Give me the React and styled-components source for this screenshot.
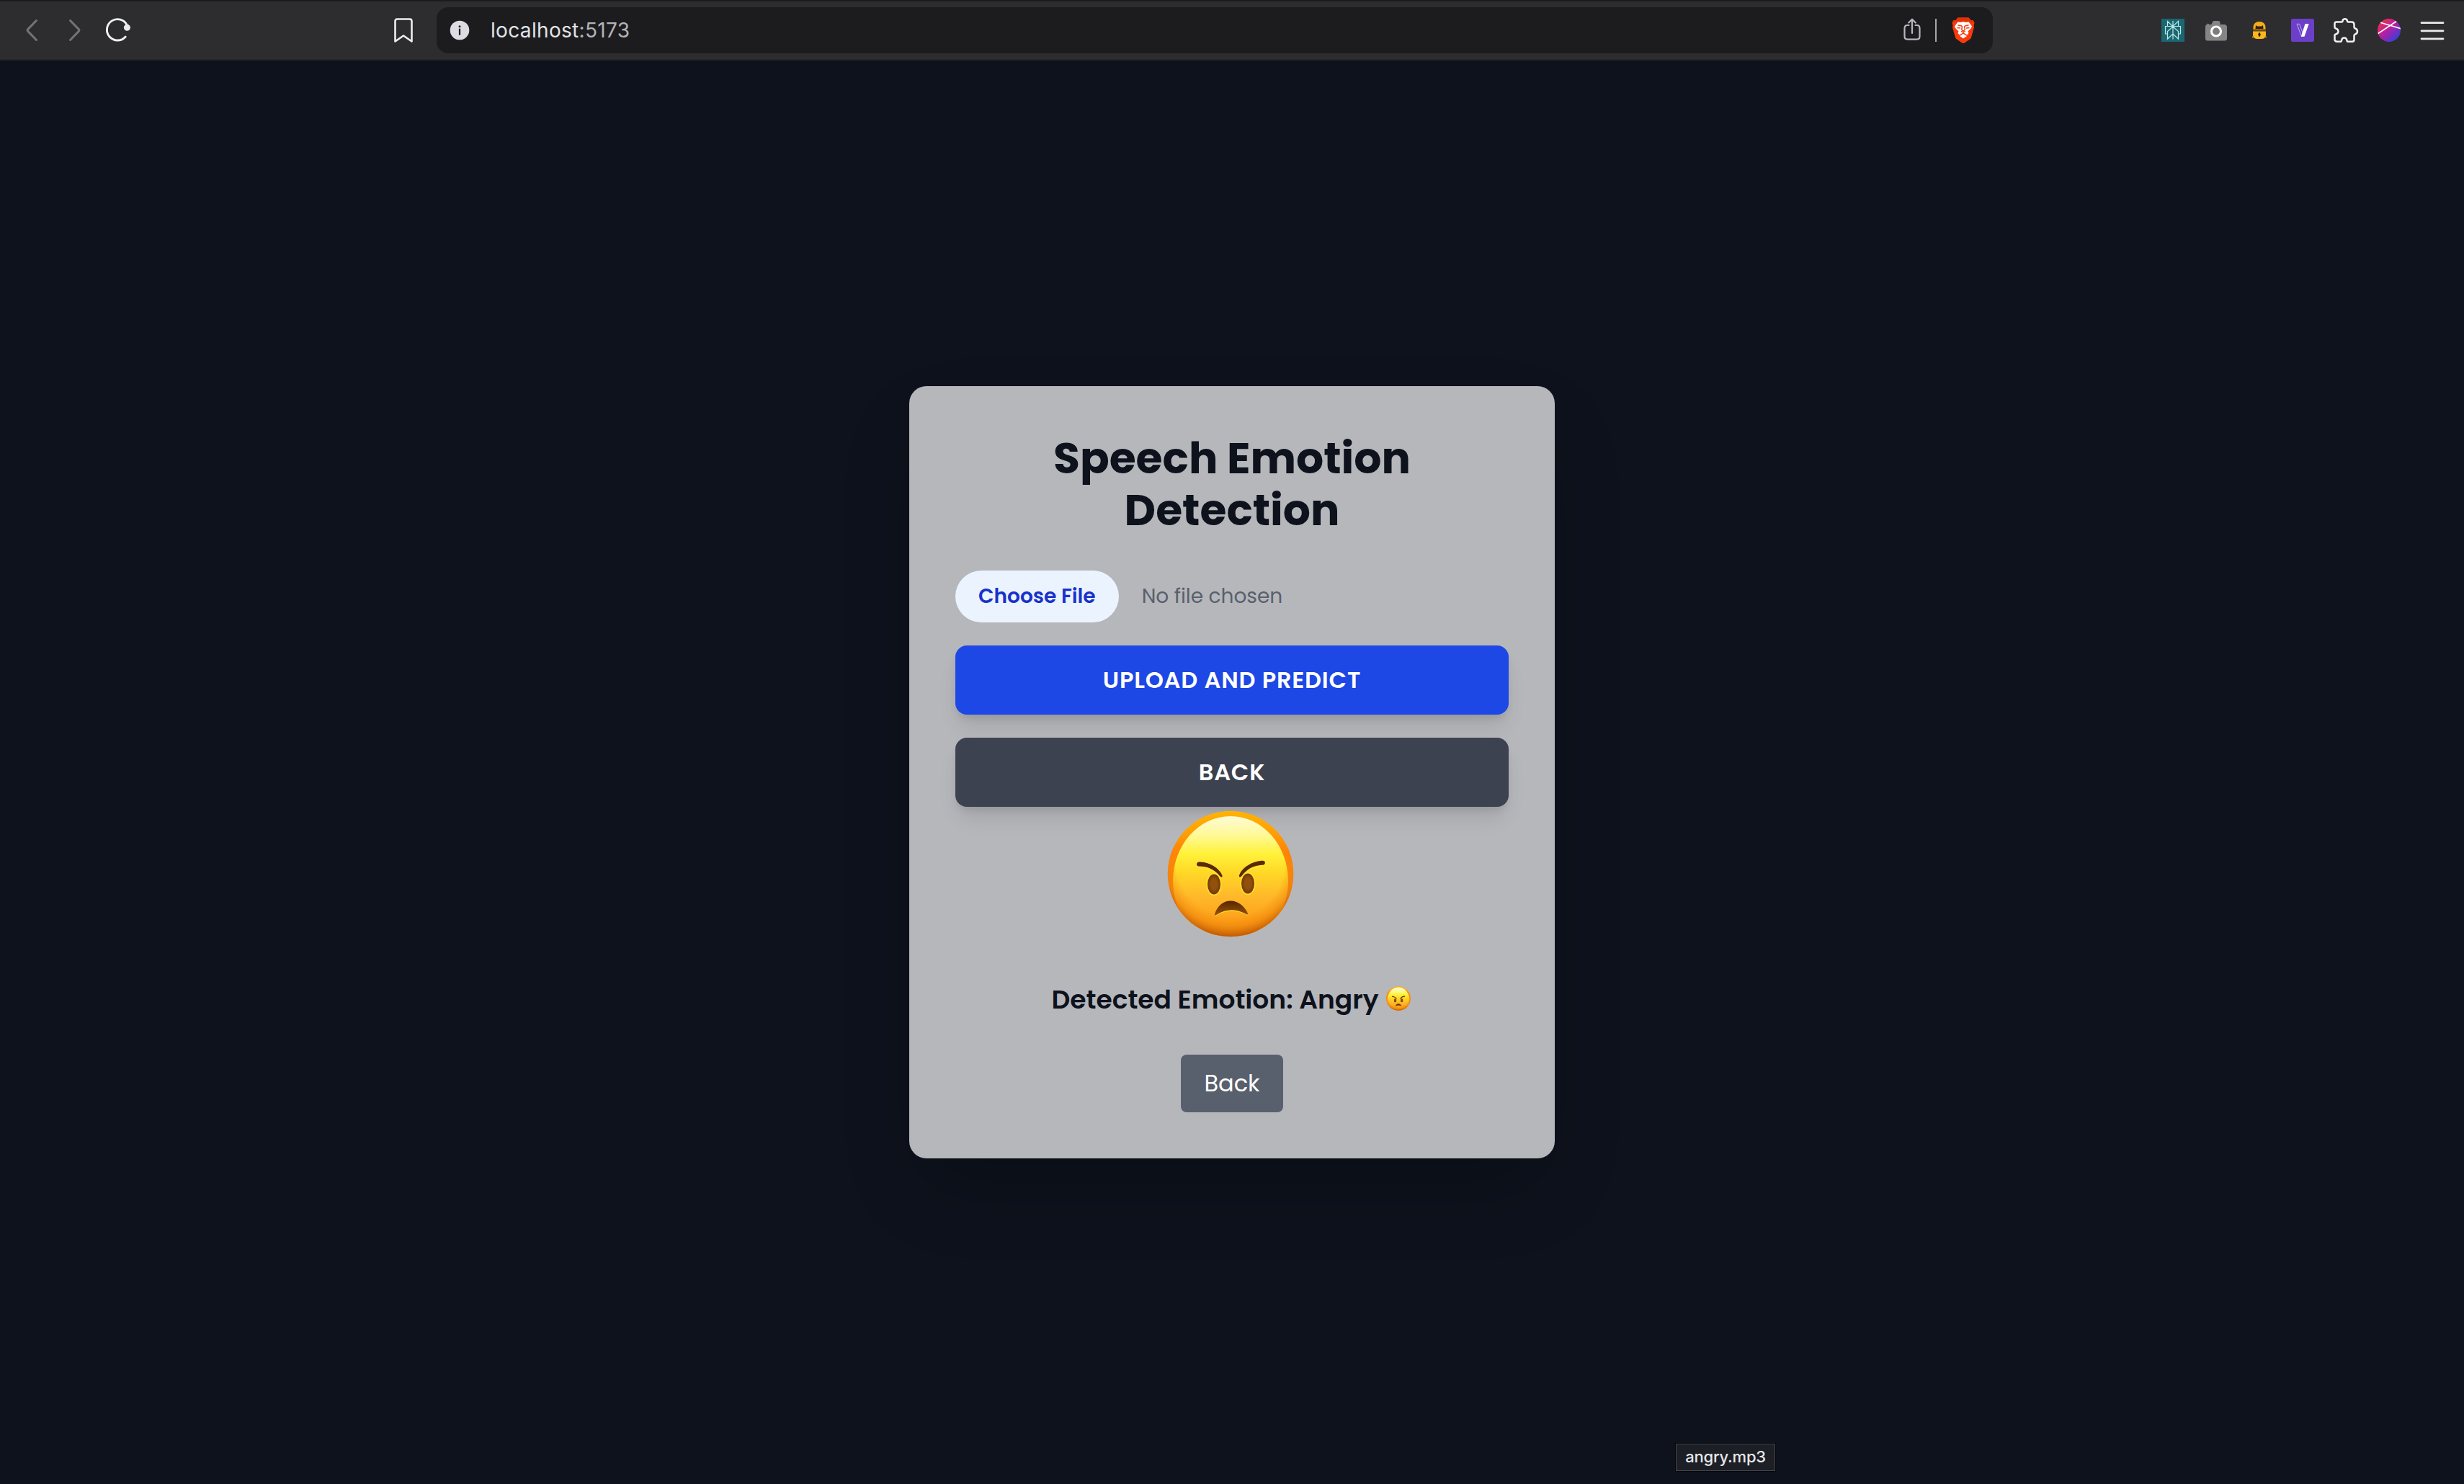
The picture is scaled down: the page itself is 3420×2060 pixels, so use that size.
import React from "react";
import styled, { createGlobalStyle } from "styled-components";

const GlobalStyle = createGlobalStyle`
  *, *::before, *::after { box-sizing: border-box; }
  html, body { margin: 0; padding: 0; background: #0d121c; }
  body { font-family: Poppins, Inter, "Liberation Sans", sans-serif; }
  button { font: inherit; border: 0; padding: 0; margin: 0; cursor: pointer; }
`;

const Screen = styled.div`
  display: flex;
  flex-direction: column;
  width: 3420px;
  height: 2060px;
  overflow: hidden;
  background: #0d121c;
`;

const Toolbar = styled.header`
  display: flex;
  align-items: center;
  flex: none;
  height: 84px;
  padding-left: 30px;
  padding-right: 24px;
  background: #2d2d2f;
  border-top: 2px solid #1b1b1d;
  border-bottom: 2px solid #262629;
`;

const NavGroup = styled.nav`
  display: flex;
  align-items: center;
  gap: 20px;
  width: 510px;
`;

const Glyph = styled.svg`
  display: block;
  flex: none;
  overflow: visible;
  width: ${(p) => p.$w || 40}px;
  height: ${(p) => p.$h || 40}px;
`;

const BookmarkSlot = styled.div`
  width: 66px;
`;

const AddressBar = styled.div`
  display: flex;
  align-items: center;
  width: 2160px;
  height: 64px;
  padding: 0 24px 0 18px;
  border-radius: 16px;
  background: #1c1c1e;
`;

const Url = styled.span`
  flex: 1;
  margin-left: 29px;
  font-family: Inter, sans-serif;
  font-size: 28px;
  line-height: 40px;
  letter-spacing: 0.33px;
  color: #e3e3e6;
`;

const Port = styled.span`
  color: #b3b3b9;
`;

const Divider = styled.span`
  width: 2px;
  height: 32px;
  margin: 0 20px 0 17px;
  background: #a5a5ab;
`;

const Extensions = styled.div`
  display: flex;
  align-items: center;
  gap: 20px;
  margin-left: auto;
`;

const Main = styled.main`
  display: flex;
  flex: 1;
  align-items: center;
  justify-content: center;
`;

const Card = styled.section`
  display: flex;
  flex-direction: column;
  align-items: center;
  width: 896px;
  padding: 64px;
  border-radius: 24px;
  background: #b6b7bb;
  box-shadow: 0 50px 100px -24px rgba(0, 0, 0, 0.25);
`;

const Title = styled.h1`
  width: 640px;
  margin: 0 0 48px;
  font-size: 60px;
  line-height: 72px;
  font-weight: 700;
  text-align: center;
  color: #0d121c;
`;

const FileRow = styled.div`
  display: flex;
  align-items: center;
  align-self: stretch;
  gap: 32px;
  margin-bottom: 32px;
`;

const ChooseButton = styled.button`
  height: 72px;
  padding: 0 32px;
  border-radius: 36px;
  background: #ebf3ff;
  color: #1832cb;
  font-size: 28px;
  line-height: 40px;
  font-weight: 600;
`;

const FileStatus = styled.span`
  font-size: 28px;
  line-height: 40px;
  color: #59606d;
`;

const ActionButton = styled.button`
  align-self: stretch;
  flex: none;
  height: 96px;
  margin-bottom: ${(p) => (p.$last ? 0 : 32)}px;
  border-radius: 16px;
  background: ${(p) => p.$bg};
  color: #fff;
  font-size: 32px;
  line-height: 48px;
  font-weight: 600;
  letter-spacing: 0.8px;
  box-shadow: 0 20px 30px -6px rgba(0, 0, 0, 0.1), 0 8px 12px -4px rgba(0, 0, 0, 0.1);
`;

const Result = styled.div`
  display: flex;
  flex-direction: column;
  align-items: center;
`;

const Face = styled.div`
  padding: 5px 4px 0 0;
  margin-bottom: 59px;
`;

const Detected = styled.p`
  display: flex;
  align-items: center;
  gap: 11px;
  margin: 0 0 48px;
  padding-right: 2px;
  font-size: 36px;
  line-height: 56px;
  font-weight: 600;
  color: #0d121c;
`;

const InlineFace = styled.span`
  margin-bottom: 4px;
`;

const BackButton = styled.button`
  height: 80px;
  padding: 0 32px;
  border-radius: 8px;
  background: #59606d;
  color: #fff;
  font-size: 32px;
  line-height: 48px;
`;

const DragLabel = styled.div`
  position: absolute;
  left: 2326px;
  top: 2004px;
  width: 138px;
  height: 38px;
  display: flex;
  align-items: center;
  justify-content: center;
  padding-bottom: 2px;
  border: 1px solid #45474c;
  outline: 1px solid #05070b;
  background: #1c1f26;
  color: #e6e6e7;
  font-family: Inter, sans-serif;
  font-size: 22px;
  font-weight: 500;
  letter-spacing: -0.2px;
`;

function AngryFace({ id, size }) {
  return (
    <Glyph $w={size} $h={size} viewBox="0 0 176 176">
      <defs>
        <linearGradient id={id + "rim"} x1="0" y1="0" x2="0" y2="1">
          <stop offset="0" stopColor="#ffb400" />
          <stop offset="0.14" stopColor="#ffa405" />
          <stop offset="0.32" stopColor="#ff8408" />
          <stop offset="0.6" stopColor="#f6860c" />
          <stop offset="1" stopColor="#c05c06" />
        </linearGradient>
        <linearGradient id={id + "face"} x1="0" y1="0" x2="0" y2="1">
          <stop offset="0" stopColor="#fffbd6" />
          <stop offset="0.15" stopColor="#fff994" />
          <stop offset="0.29" stopColor="#fff23a" />
          <stop offset="0.44" stopColor="#ffd726" />
          <stop offset="0.62" stopColor="#ffb82a" />
          <stop offset="0.8" stopColor="#fda21a" />
          <stop offset="0.95" stopColor="#e88a10" />
        </linearGradient>
        <radialGradient id={id + "edge"} cx="0.5" cy="0.4" r="0.6">
          <stop offset="0.72" stopColor="#f58a08" stopOpacity="0" />
          <stop offset="0.86" stopColor="#ee8108" stopOpacity="0.5" />
          <stop offset="1" stopColor="#bb5604" stopOpacity="0.95" />
        </radialGradient>
        <linearGradient id={id + "mouth"} x1="0" y1="0" x2="0" y2="1">
          <stop offset="0" stopColor="#572500" />
          <stop offset="1" stopColor="#96520a" />
        </linearGradient>
        <radialGradient id={id + "eye"}>
          <stop offset="0.5" stopColor="#91500c" />
          <stop offset="1" stopColor="#6f3804" />
        </radialGradient>
        <clipPath id={id + "clip"}>
          <circle cx="88" cy="88" r="87.3" />
        </clipPath>
      </defs>
      <circle cx="88" cy="88" r="87.3" fill={`url(#${id}rim)`} />
      <g clipPath={`url(#${id}clip)`}>
        <ellipse cx="88" cy="98" rx="80" ry="90" fill={`url(#${id}face)`} />
        <circle cx="88" cy="88" r="87.3" fill={`url(#${id}edge)`} />
      </g>
      <g fill="none" stroke="#ffe52b" strokeOpacity="0.75" strokeWidth="2.4">
        <ellipse cx="65" cy="102.5" rx="9.5" ry="14.5" />
        <ellipse cx="112" cy="101.5" rx="9.5" ry="14.5" />
        <path d="M67 145.5Q88 132 112 144.5" />
        <path d="M42 78Q60 77 74 93.5M136 76Q116 77 102 93" />
      </g>
      <ellipse cx="65" cy="102.5" rx="9" ry="14" fill={`url(#${id}eye)`} />
      <ellipse cx="112" cy="101.5" rx="9" ry="14" fill={`url(#${id}eye)`} />
      <path d="M41.5 73C43 71 47 71.5 51 72C62 74 73 81 76.500 90.5C77 93 75 93 73.500 91.5C64 80 55 78 44.500 77.5C41 77.5 40.500 75 41.500 73Z" fill="#5b2904" />
      <path d="M135.500 71C134 69 130 69.5 126 70.5C114 73 103 81 100 90C99.500 93 101.500 93 103 91.5C112 80 121 76.500 131 75.8C135.500 76 136.500 73.500 135.500 71Z" fill="#5b2904" />
      <path d="M66 144C70 131 79 125.500 88 125.5C98 125.500 107 132 112 143C112 145 110.500 145 109 143.5C95 136.500 82 136.500 69 144.5C67 145.500 65.500 146 66 144Z" fill={`url(#${id}mouth)`} />
    </Glyph>
  );
}

const BackIcon = () => (
  <Glyph viewBox="0 0 40 40" fill="none" stroke="#737377" strokeWidth="3" strokeLinecap="round" strokeLinejoin="round">
    <path d="M20.500 6.5L8.700 18.6Q7.500 20 8.700 21.4L20.500 33.5" />
  </Glyph>
);

const ForwardIcon = () => (
  <Glyph viewBox="0 0 40 40" fill="none" stroke="#737377" strokeWidth="3" strokeLinecap="round" strokeLinejoin="round">
    <path d="M7.500 6.5L19.300 18.6Q20.500 20 19.300 21.4L7.500 33.5" />
  </Glyph>
);

const ReloadIcon = () => (
  <Glyph viewBox="0 0 40 40" fill="none">
    <path d="M24.200 29A14.700 14.700 0 1 1 26.300 12.800" stroke="#eef1f1" strokeWidth="2.900" strokeLinecap="round" />
    <circle cx="26.400" cy="16.300" r="4.500" fill="#e9ecec" />
  </Glyph>
);

const BookmarkIcon = () => (
  <Glyph viewBox="0 0 40 40" fill="none" stroke="#eceeee" strokeWidth="2.6" strokeLinejoin="round">
    <path d="M11.200 4.5H28.800Q31.500 4.500 31.500 7.500V35.5L20 27.500L8.500 35.5V7.500Q8.500 4.500 11.200 4.500Z" />
  </Glyph>
);

const InfoIcon = () => (
  <Glyph $w={28} $h={28} viewBox="0 0 28 28">
    <circle cx="14" cy="14" r="13.3" fill="#dcdce2" />
    <circle cx="14" cy="8.7" r="1.500" fill="#1c1c1e" />
    <path d="M14 12.500V20" stroke="#1c1c1e" strokeWidth="2.200" strokeLinecap="round" />
  </Glyph>
);

const ShareIcon = () => (
  <Glyph $w={30} viewBox="0 0 30 40" fill="none" stroke="#b8b5c0" strokeWidth="2.2" strokeLinecap="round" strokeLinejoin="round">
    <path d="M10.500 13H8.500Q4.500 13 4.500 17.300V28.500Q4.500 32.600 8.500 32.600H21.500Q25.500 32.600 25.500 28.500V17.300Q25.500 13 21.500 13H19.500" />
    <path d="M15 24V5M10.200 9.500L15 4.700L19.800 9.500" />
  </Glyph>
);

const LionIcon = () => (
  <Glyph $w={34} $h={38} viewBox="0 0 34 38">
    <path d="M9.500 1.500H24.500L27.500 5L30.500 5L32.500 8.700L31.500 12.200L32 15L28 29Q27.500 30.500 26 31.500L18.500 36.700Q17 37.500 15.500 36.700L8 31.500Q6.500 30.500 6 29L2 15L2.500 12.200L1.500 8.700L3.500 5L6.500 5Z" fill="#fb3a0c" />
    <path d="M9.500 1.500H24.500L27.500 5L30.500 5L32.500 8.700Q25 5.700 17 6.200Q9 5.700 1.500 8.700L3.500 5L6.500 5Z" fill="#df3208" />
    <path d="M9.500 7.500L13.500 8L17 7.300L20.500 8L24.500 7.500L29 13.500L27.500 16.500L23.500 20.500L24.500 23L22.500 25.500L19.500 23.800L17 22L14.500 23.800L11.500 25.500L9.500 23L10.500 20.500L6.500 16.500L5 13.500Z" fill="#fff" />
    <path d="M9.500 12L14 12.700L15.500 14L14.700 18L17 20.500L19.300 18L18.500 14L20 12.700L24.500 12" fill="none" stroke="#fb3a0c" strokeWidth="1.4" />
    <path d="M8.500 15.500L13 16M25.500 15.500L21 16M14 20.300L17 21.800L20 20.300" fill="none" stroke="#fb3a0c" strokeWidth="1.3" />
    <path d="M17 24L22 27L17 30.500L12 27Z" fill="#fff" />
  </Glyph>
);

const SearchExtension = () => (
  <Glyph viewBox="0 0 40 40">
    <path d="M4 4H36V36H4Z" fill="#1c6672" />
    <path d="M20 7V32.500M20 15L12.500 7.500V14.500H20L27.500 7.500V14.500H20M20 15L12.500 21.500V32L20 25L27.500 32V21.500L20 15M12.500 14.500H9.500V25H12.500M27.500 14.500H30.500V25H27.500" fill="none" stroke="#b7e9e6" strokeWidth="1.2" />
  </Glyph>
);

const CameraExtension = () => (
  <Glyph viewBox="0 0 40 40">
    <path d="M8 34.500Q5 34.500 5 31.500V15Q5 12.500 7 12L8.500 10.500L10.500 12H13.500L15 8.500Q15.500 7 17 7H23Q25 7 25.500 9V12H31Q35 12 35 15.500V31.500Q35 34.500 32 34.500Z" fill="#858585" />
    <circle cx="20" cy="21.500" r="6.500" fill="#7d7d7d" stroke="#fff" strokeWidth="3.2" />
  </Glyph>
);

const LockExtension = () => (
  <Glyph viewBox="0 0 40 40">
    <path d="M11.500 20V16Q12 8 20 8Q28 8 28.500 16V20Z" fill="#f5ad1c" />
    <path d="M14.500 18L15 13L17 14.500H23L25 13L25.500 18Z" fill="#30210c" />
    <path d="M11.500 18.500H28.500V21.500H11.500Z" fill="#6e4b12" />
    <path d="M11 21.500H29V27Q28 32 23 32H17Q12 32 11 27Z" fill="#fdb71d" />
    <path d="M20 22.500L22 26L20 29.500L18 26Z" fill="#33240a" />
    <path d="M11 28V31M29 28V31" stroke="#c68b14" strokeWidth="1.3" />
  </Glyph>
);

const LetterExtension = () => (
  <Glyph viewBox="0 0 40 40">
    <rect x="4" y="4" width="32" height="32" rx="2.5" fill="#6c3fc8" />
    <path d="M12 11.300H15.500L21 26L20 28.500H18.500Z" fill="none" stroke="#c9b6f0" strokeWidth="0.9" />
    <path d="M23.500 11H28.700L22.500 28.800H17.800Z" fill="#fff" />
  </Glyph>
);

const PuzzleIcon = () => (
  <Glyph viewBox="0 0 40 40" fill="none" stroke="#eef0f0" strokeWidth="2.5" strokeLinejoin="round">
    <path d="M7 8.500H14Q15.500 8.500 15.500 7Q16 4.300 18.800 4.300Q21.500 4.300 22 7Q22 8.500 23.500 8.500H28Q31.500 8.500 31.500 12V15.500Q31.500 17 33 17.500Q36 18.500 36 21.500Q36 24.500 33 25.500Q31.500 26 31.500 27.500V33Q31.500 35.700 29 35.700H22.500Q21.500 35.700 21.500 34.500Q21 30.500 17.700 30.500Q14.500 30.500 14 34.500Q14 35.700 12.500 35.700H8Q4.500 35.700 4.500 32.500V27Q4.500 26 6 25.500Q9.500 24.500 9.500 21.500Q9.500 18.500 6 17.500Q4.500 17 4.500 15.500V11Q4.500 8.500 7 8.500Z" />
  </Glyph>
);

const ProfileIcon = () => (
  <Glyph viewBox="0 0 40 40">
    <defs>
      <linearGradient id="profile" x1="0.1" y1="0.1" x2="0.85" y2="0.9">
        <stop offset="0" stopColor="#f2304a" />
        <stop offset="0.5" stopColor="#b01fa6" />
        <stop offset="1" stopColor="#3340dc" />
      </linearGradient>
      <clipPath id="disc"><circle cx="20" cy="20" r="16" /></clipPath>
    </defs>
    <circle cx="20" cy="20" r="16" fill="url(#profile)" />
    <path clipPath="url(#disc)" d="M4 25L31 7M7 9L37 18" stroke="#fff" strokeWidth="1.7" fill="none" />
  </Glyph>
);

const MenuIcon = () => (
  <Glyph viewBox="0 0 40 40" stroke="#e9eceb" strokeWidth="2.8" strokeLinecap="round">
    <path d="M5 9.700H35M5 20.800H35M5 31.800H35" />
  </Glyph>
);

export default function App() {
  return (
    <>
      <GlobalStyle />
      <Screen>
        <Toolbar>
          <NavGroup>
            <BackIcon />
            <ForwardIcon />
            <ReloadIcon />
          </NavGroup>
          <BookmarkSlot>
            <BookmarkIcon />
          </BookmarkSlot>
          <AddressBar>
            <InfoIcon />
            <Url>localhost<Port>:5173</Port></Url>
            <ShareIcon />
            <Divider />
            <LionIcon />
          </AddressBar>
          <Extensions>
            <SearchExtension />
            <CameraExtension />
            <LockExtension />
            <LetterExtension />
            <PuzzleIcon />
            <ProfileIcon />
            <MenuIcon />
          </Extensions>
        </Toolbar>
        <Main>
          <Card>
            <Title>Speech Emotion Detection</Title>
            <FileRow>
              <ChooseButton>Choose File</ChooseButton>
              <FileStatus>No file chosen</FileStatus>
            </FileRow>
            <ActionButton $bg="#1d48e5">UPLOAD AND PREDICT</ActionButton>
            <ActionButton $bg="#3c424f" $last>BACK</ActionButton>
            <Result>
              <Face>
                <AngryFace id="large" size={176} />
              </Face>
              <Detected>
                <span>Detected Emotion: Angry</span>
                <InlineFace>
                  <AngryFace id="small" size={34} />
                </InlineFace>
              </Detected>
              <BackButton>Back</BackButton>
            </Result>
          </Card>
        </Main>
        <DragLabel>angry.mp3</DragLabel>
      </Screen>
    </>
  );
}
